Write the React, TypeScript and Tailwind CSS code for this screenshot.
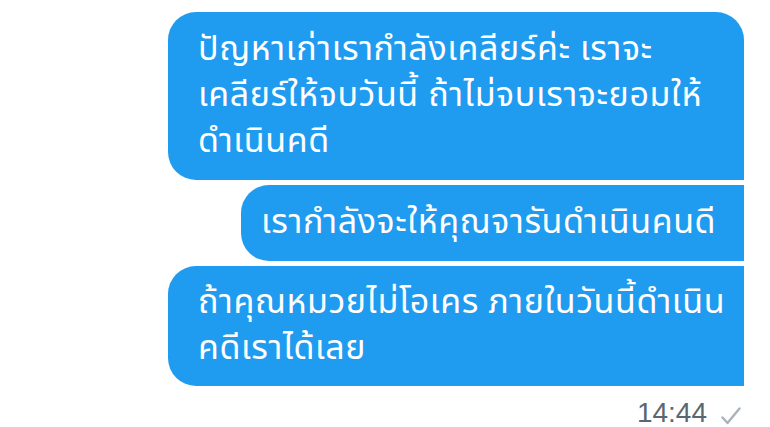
import React from "react";

const font = { fontFamily: '"Noto Sans Thai", "Noto Sans", "Liberation Sans", sans-serif' };

export default function App() {
  return (
    <div className="w-[770px] h-[427px] bg-white overflow-hidden" style={font}>
      <div className="flex flex-col items-end pt-[12px] pr-[26px] gap-[5px]">
        <div className="w-[576px] bg-[#1f9bf0] text-white text-[34px] leading-[46px] pl-[30px] pr-[10px] py-[15px] rounded-tl-[28px] rounded-tr-[28px] rounded-bl-[28px] whitespace-nowrap tracking-[0.6px]">
          ปัญหาเก่าเรากำลังเคลียร์ค่ะ เราจะ
          <br />
          เคลียร์ให้จบวันนี้ ถ้าไม่จบเราจะยอมให้
          <br />
          ดำเนินคดี
        </div>
        <div className="w-[503px] bg-[#1f9bf0] text-white text-[34px] leading-[46px] pl-[20px] pr-[28px] py-[15px] rounded-tl-[28px] rounded-bl-[28px] whitespace-nowrap text-right tracking-[0.6px]">
          เรากำลังจะให้คุณจารันดำเนินคนดี
        </div>
        <div className="w-[576px] bg-[#1f9bf0] text-white text-[34px] leading-[46px] pl-[30px] pr-[10px] py-[14px] rounded-tl-[28px] rounded-bl-[28px] whitespace-nowrap tracking-[0.6px]">
          ถ้าคุณหมวยไม่โอเคร ภายในวันนี้ดำเนิน
          <br />
          คดีเราได้เลย
        </div>
        <div className="flex items-center gap-[14px] pt-[7px] pr-[3px]">
          <span className="text-[28px] leading-[30px] text-[#5b6770]" style={{ fontFamily: '"Liberation Sans", sans-serif' }}>
            14:44
          </span>
          <svg width="20" height="18" viewBox="0 0 20 18" className="mt-[6px]">
            <path d="M1.5 10.5 L6.5 16 L18.5 1.5" fill="none" stroke="#a9b3bb" strokeWidth="2.4" strokeLinecap="round" strokeLinejoin="round" />
          </svg>
        </div>
      </div>
    </div>
  );
}
